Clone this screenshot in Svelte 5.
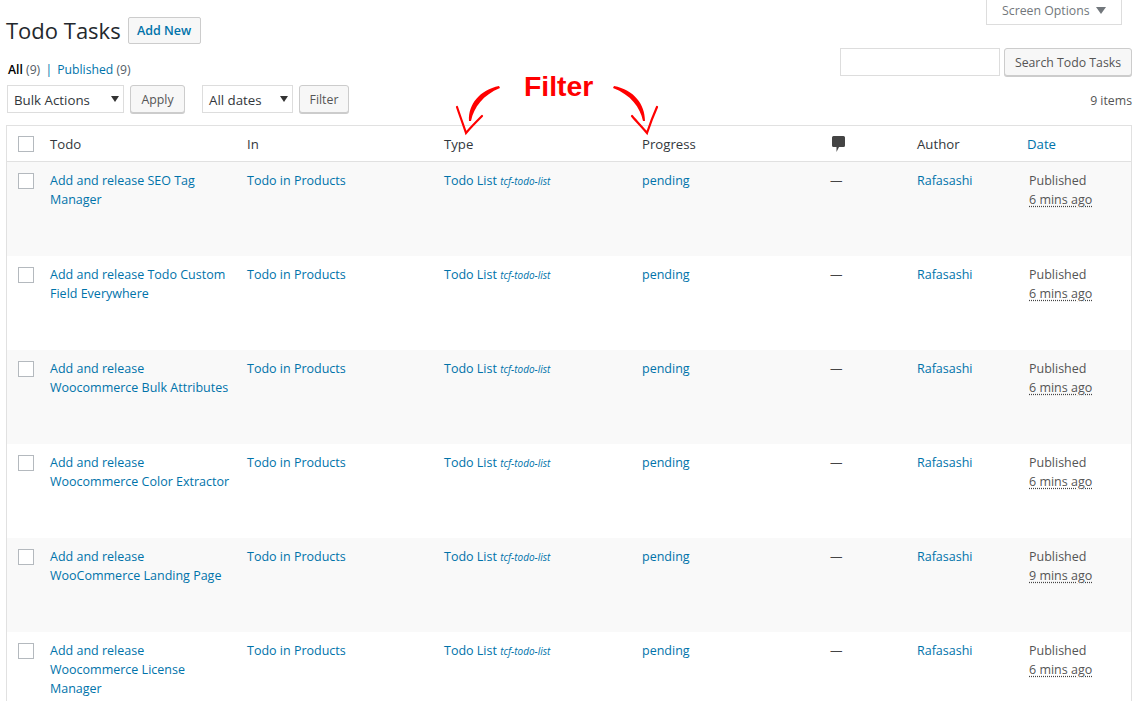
<script>
  const rows = [
    { title: ["Add and release SEO Tag", "Manager"], ago: "6 mins ago" },
    { title: ["Add and release Todo Custom", "Field Everywhere"], ago: "6 mins ago" },
    { title: ["Add and release", "Woocommerce Bulk Attributes"], ago: "6 mins ago" },
    { title: ["Add and release", "Woocommerce Color Extractor"], ago: "6 mins ago" },
    { title: ["Add and release", "WooCommerce Landing Page"], ago: "9 mins ago" },
    { title: ["Add and release", "Woocommerce License", "Manager"], ago: "6 mins ago" }
  ];
</script>

<div class="wrap">
  <div class="top">
    <div class="left">
      <div class="heading">
        <h1>Todo Tasks</h1>
        <button class="add">Add New</button>
      </div>
      <div class="subsub">
        <b>All</b> <span class="count">(9)</span>
        <span class="sep">|</span>
        <a href="#p">Published</a> <span class="count">(9)</span>
      </div>
      <div class="actions">
        <div class="select bulk">Bulk Actions<i></i></div>
        <button class="btn apply">Apply</button>
        <div class="select dates">All dates<i></i></div>
        <button class="btn filter-btn">Filter</button>
      </div>
    </div>
    <div class="right">
      <div class="screen">Screen Options<i></i></div>
      <div class="search">
        <div class="input"></div>
        <button class="btn search-btn">Search Todo Tasks</button>
      </div>
      <div class="items">9 items</div>
    </div>
  </div>

  <div class="annot">
    <span class="filter">Filter</span>
    <svg width="240" height="60" viewBox="0 0 240 60" fill="none">
      <path d="M69 8 C50 12 38 26 39 43 L41 43 C44 29 53 17 70 10Z" fill="#f00" />
      <path d="M27 29 C30 38 33 46 36 55 C41 49 46 44 52 38" stroke="#f00" stroke-width="2.200" stroke-linecap="round" />
      <path d="M184 8 C204 12 215 26 215 43 L213 43 C210 29 201 17 183 10Z" fill="#f00" />
      <path d="M202 38 C207 44 212 49 217 55 C220 46 223 38 227 29" stroke="#f00" stroke-width="2.200" stroke-linecap="round" />
    </svg>
  </div>

  <table>
    <colgroup>
      <col class="c-check" /><col class="c-todo" /><col class="c-todo" /><col class="c-type" />
      <col class="c-prog" /><col class="c-comm" /><col class="c-auth" /><col />
    </colgroup>
    <thead>
      <tr>
        <th class="check"><span class="box"></span></th>
        <th>Todo</th>
        <th>In</th>
        <th>Type</th>
        <th>Progress</th>
        <th class="comments">
          <svg class="bubble" width="16" height="16" viewBox="0 0 16 16">
            <path d="M2.500 0h10a1.500 1.500 0 0 1 1.500 1.500v8a1.500 1.500 0 0 1-1.500 1.500h-4.500l-2.500 5v-5h-3a1.500 1.500 0 0 1-1.500-1.500v-8a1.500 1.500 0 0 1 1.500-1.500z" fill="#444" />
          </svg>
        </th>
        <th>Author</th>
        <th><a href="#d">Date</a></th>
      </tr>
    </thead>
    <tbody>
      {#each rows as row, i}
        <tr class:alt={i % 2 === 0}>
          <td class="check"><span class="box"></span></td>
          <td>
            <a href="#t">{#each row.title as line}<span class="line">{line}</span>{/each}</a>
          </td>
          <td><a href="#i">Todo in Products</a></td>
          <td><a href="#l">Todo List <em>tcf-todo-list</em></a></td>
          <td><a href="#s">pending</a></td>
          <td class="dash">—</td>
          <td><a href="#a">Rafasashi</a></td>
          <td class="date">Published<br /><abbr>{row.ago}</abbr></td>
        </tr>
      {/each}
    </tbody>
  </table>
</div>

<style>
  :global(body) {
    background: #fff;
    overflow: hidden;
  }
  .wrap {
    position: relative;
    height: 701px;
    overflow: hidden;
    padding: 0 5px 0 6px;
    font: 12.5px/19px "Open Sans", sans-serif;
    color: #444;
  }
  a {
    color: #0073aa;
    text-decoration: none;
  }
  .top {
    display: flex;
    justify-content: space-between;
    height: 125px;
  }
  .heading {
    display: flex;
    align-items: center;
    gap: 7px;
    padding-top: 16px;
  }
  h1 {
    margin: 0;
    font-size: 22px;
    font-weight: 400;
    line-height: 29px;
    color: #23282d;
  }
  button {
    font: inherit;
    cursor: pointer;
  }
  .add {
    box-sizing: border-box;
    width: 73px;
    height: 27px;
    padding: 0;
    border: 1px solid #ccc;
    border-radius: 2px;
    background: #f7f7f7;
    color: #0073aa;
    font-weight: 600;
  }
  .subsub {
    margin-top: 15px;
    padding-left: 2px;
    font-size: 12.2px;
    line-height: 20px;
    color: #555d66;
  }
  .subsub b {
    color: #000;
    font-weight: 600;
  }
  .count {
    color: #555d66;
  }
  .sep {
    margin: 0 2px;
    color: #0073aa;
  }
  .actions {
    display: flex;
    align-items: flex-start;
    margin-top: 5px;
    padding-left: 1px;
  }
  .select {
    position: relative;
    box-sizing: border-box;
    height: 28px;
    padding-left: 6px;
    border: 1px solid #ddd;
    font-size: 13.300px;
    line-height: 28px;
    color: #32373c;
  }
  .select i {
    position: absolute;
    right: 4px;
    top: 10px;
    border: 4px solid transparent;
    border-top: 6px solid #333;
    border-bottom: 0;
  }
  .bulk {
    width: 117px;
    margin-right: 6px;
  }
  .dates {
    width: 91px;
    margin: 0 6px 0 17px;
  }
  .btn {
    box-sizing: border-box;
    height: 28px;
    padding: 0;
    border: 1px solid #ccc;
    border-radius: 3px;
    background: #f7f7f7;
    box-shadow: 0 1px 0 #ccc;
    color: #555;
    font-size: 12.300px;
  }
  .apply {
    width: 55px;
  }
  .filter-btn {
    width: 50px;
  }
  .search-btn {
    width: 128px;
  }
  .right {
    display: flex;
    flex-direction: column;
    align-items: flex-end;
  }
  .screen {
    position: relative;
    box-sizing: border-box;
    width: 136px;
    height: 25px;
    margin-right: 10px;
    padding-left: 15px;
    border: 1px solid #ddd;
    border-top: 0;
    color: #72777c;
    font-size: 12.300px;
    line-height: 21px;
  }
  .screen i {
    position: absolute;
    right: 15px;
    top: 7px;
    border: 5px solid transparent;
    border-top: 7px solid #72777c;
    border-bottom: 0;
  }
  .search {
    display: flex;
    gap: 4px;
    margin-top: 23px;
  }
  .input {
    box-sizing: border-box;
    width: 160px;
    height: 28px;
    border: 1px solid #ddd;
  }
  .items {
    margin-top: 15px;
    color: #555;
    font-size: 12.300px;
  }
  .annot {
    position: absolute;
    left: 430px;
    top: 60px;
    width: 240px;
    height: 70px;
  }
  .annot svg {
    position: absolute;
    left: 0;
    top: 18px;
  }
  .filter {
    position: absolute;
    left: 94px;
    top: 9px;
    font: bold 28.400px/34px "Liberation Sans", sans-serif;
    color: #f00;
  }
  table {
    width: 1126px;
    border-collapse: collapse;
    table-layout: fixed;
    border: 1px solid #e1e1e1;
  }
  .c-check { width: 43.5px; }
  .c-todo { width: 197px; }
  .c-type { width: 198px; }
  .c-prog { width: 188px; }
  .c-comm { width: 87px; }
  .c-auth { width: 110px; }
  th {
    box-sizing: border-box;
    height: 36px;
    padding: 2px 0 0;
    font-weight: 400;
    text-align: left;
    border-bottom: 1px solid #e1e1e1;
    color: #32373c;
    font-size: 13.200px;
  }
  th.check,
  th.comments {
    padding-top: 0;
  }
  td {
    height: 94px;
    box-sizing: border-box;
    padding: 9px 10px 0 0;
    vertical-align: top;
    color: #555;
  }
  .line {
    display: block;
  }
  .alt td {
    background: #f9f9f9;
  }
  .box {
    display: block;
    box-sizing: border-box;
    width: 16px;
    height: 16px;
    margin-left: 11px;
    border: 1px solid #b4b9be;
    background: #fff;
  }
  td.check .box {
    margin-top: 2px;
  }
  em {
    font-size: 10px;
  }
  .date {
    padding-left: 2px;
  }
  abbr {
    text-decoration: underline dotted #444;
    text-underline-offset: 2px;
  }
  .bubble {
    display: block;
    margin-left: 1px;
  }
  .dash {
    color: #444;
  }
</style>
